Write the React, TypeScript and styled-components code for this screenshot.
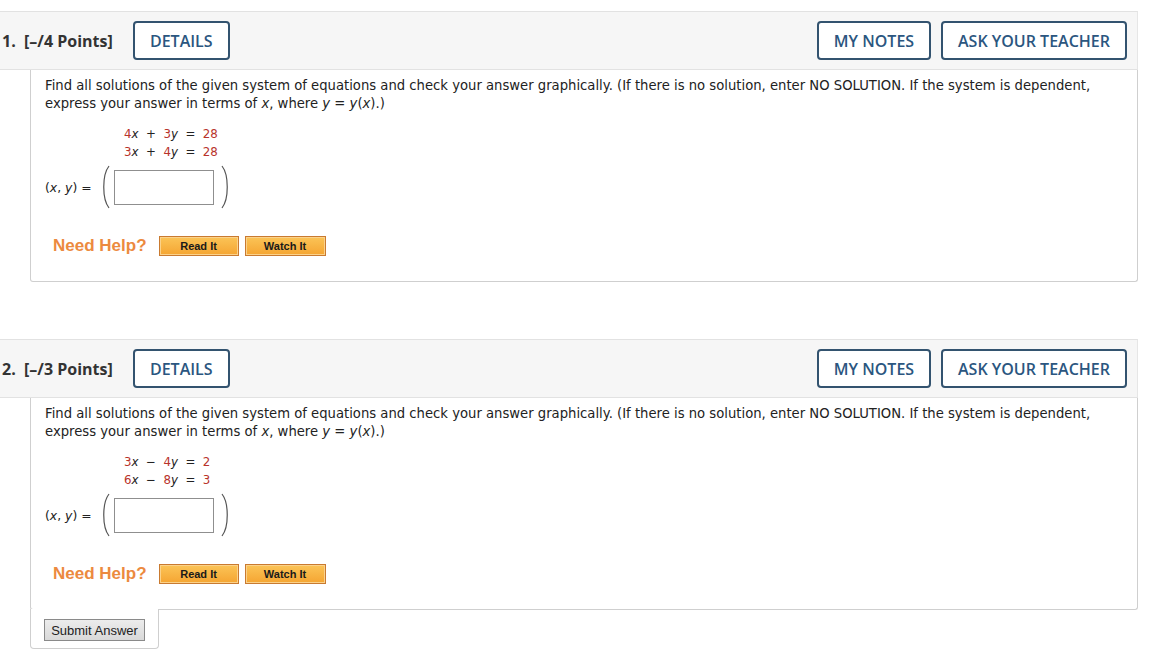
import React from "react";
import styled, { createGlobalStyle } from "styled-components";

const Global = createGlobalStyle`
  html, body { margin: 0; padding: 0; background: #fff; }
  body { font-family: Verdana, "DejaVu Sans", "Noto Sans", sans-serif; color: #222; }
`;

const Page = styled.div`
  padding-top: 11px;
  width: 1138px;
`;

const Block = styled.section<{ $gap?: number }>`
  margin-bottom: ${(p) => p.$gap ?? 0}px;
`;

const Header = styled.div`
  display: flex;
  align-items: center;
  box-sizing: border-box;
  height: 59px;
  background: #f6f6f6;
  border-top: 1px solid #e2e2e2;
  border-bottom: 1px solid #e2e2e2;
  border-right: 1px solid #e6e6e6;
  padding: 0 10px 0 2px;
  gap: 10px;
`;

const Title = styled.div`
  font-family: "Open Sans", sans-serif;
  font-weight: 700;
  font-size: 16px;
  color: #333;
  margin-right: 10px;
  white-space: pre;
`;

const Spacer = styled.div`
  flex: 1;
`;

const OutlineBtn = styled.button<{ $w: number }>`
  box-sizing: border-box;
  width: ${(p) => p.$w}px;
  height: 39px;
  border: 2px solid #33536f;
  border-radius: 4px;
  background: #fff;
  font-family: "Open Sans", sans-serif;
  font-weight: 600;
  font-size: 16px;
  color: #2b5680;
  padding: 0;
  cursor: pointer;
`;

const Body = styled.div`
  margin-left: 30px;
  box-sizing: border-box;
  width: 1108px;
  height: 212px;
  background: #fff;
  border-left: 1px solid #cfcfcf;
  border-right: 1px solid #cfcfcf;
  border-bottom: 1px solid #cfcfcf;
  border-radius: 0 0 3px 3px;
  padding: 7px 0 0 14px;
`;

const Prompt = styled.p`
  margin: 0;
  width: 1062px;
  font-size: 13.2px;
  line-height: 18px;
  color: #222;
  i { font-style: italic; }
`;

const Equations = styled.div`
  margin: 12px 0 0 79px;
  font-size: 11.8px;
  line-height: 18px;
  color: #222;
  white-space: pre;
  i { font-style: italic; }
`;

const Num = styled.span`
  color: #b8322a;
`;

const AnswerRow = styled.div`
  display: flex;
  align-items: center;
  margin-top: 4px;
  height: 44px;
  font-size: 12.4px;
  color: #222;
  i { font-style: italic; }
`;

const Label = styled.span`
  white-space: pre;
  margin-right: 8px;
`;

const Paren = styled.svg`
  width: 12px;
  height: 44px;
  flex: none;
`;

const AnswerBox = styled.div`
  box-sizing: border-box;
  width: 100px;
  height: 35px;
  border: 1px solid #8f8f8f;
  background: #fff;
  margin: 0 5px 0 2px;
`;

const HelpRow = styled.div`
  display: flex;
  align-items: center;
  gap: 6px;
  margin: 27px 0 0 8px;
`;

const HelpLabel = styled.span`
  font-family: "Liberation Sans", Arial, sans-serif;
  font-weight: 700;
  font-size: 17px;
  color: #ec8a3f;
  margin-right: 6px;
`;

const HelpBtn = styled.button<{ $w: number }>`
  box-sizing: border-box;
  width: ${(p) => p.$w}px;
  height: 20px;
  padding: 0;
  border: 1px solid #c97a30;
  box-shadow: inset 0 0 0 1px #fbd28a;
  background: linear-gradient(#fbc457, #f5a532);
  font-family: "Liberation Sans", Arial, sans-serif;
  font-weight: 700;
  font-size: 11px;
  color: #1a1a1a;
`;

const SubmitTab = styled.div`
  margin-left: 30px;
  margin-top: -1px;
  box-sizing: border-box;
  width: 129px;
  height: 40px;
  background: #fff;
  border-left: 1px solid #cfcfcf;
  border-right: 1px solid #cfcfcf;
  border-bottom: 1px solid #cfcfcf;
  border-radius: 0 0 4px 4px;
  padding: 10px 0 0 13px;
`;

const SubmitBtn = styled.button`
  box-sizing: border-box;
  width: 101px;
  height: 22px;
  padding: 0;
  border: 1px solid #8a8a8a;
  background: linear-gradient(#ececec, #d9d9d9);
  font-family: "Liberation Sans", Arial, sans-serif;
  font-size: 13px;
  color: #222;
`;

const LeftParen = () => (
  <Paren viewBox="0 0 12 44">
    <path d="M9 1 C2 10, 2 34, 9 43" fill="none" stroke="#555" strokeWidth="1.2" />
  </Paren>
);
const RightParen = () => (
  <Paren viewBox="0 0 12 44">
    <path d="M3 1 C10 10, 10 34, 3 43" fill="none" stroke="#555" strokeWidth="1.2" />
  </Paren>
);

type Eq = [string, string, string, string];

const Question = ({
  n,
  points,
  eqs,
  submit,
}: {
  n: number;
  points: number;
  eqs: Eq[];
  submit?: boolean;
}) => (
  <Block $gap={submit ? 0 : 57}>
    <Header>
      <Title>{`${n}.  [–/${points} Points]`}</Title>
      <OutlineBtn $w={97}>DETAILS</OutlineBtn>
      <Spacer />
      <OutlineBtn $w={114}>MY NOTES</OutlineBtn>
      <OutlineBtn $w={186}>ASK YOUR TEACHER</OutlineBtn>
    </Header>
    <Body>
      <Prompt>
        Find all solutions of the given system of equations and check your answer graphically. (If there is no
        solution, enter NO SOLUTION. If the system is dependent, express your answer in terms of <i>x</i>, where{" "}
        <i>y</i> = <i>y</i>(<i>x</i>).)
      </Prompt>
      <Equations>
        {eqs.map((e, i) => (
          <div key={i}>
            <Num>{e[0]}</Num>
            <i>x</i>
            {`  ${e[1]}  `}
            <Num>{e[2]}</Num>
            <i>y</i>
            {"  =  "}
            <Num>{e[3]}</Num>
          </div>
        ))}
      </Equations>
      <AnswerRow>
        <Label>
          (<i>x</i>, <i>y</i>) =
        </Label>
        <LeftParen />
        <AnswerBox />
        <RightParen />
      </AnswerRow>
      <HelpRow>
        <HelpLabel>Need Help?</HelpLabel>
        <HelpBtn $w={80}>Read It</HelpBtn>
        <HelpBtn $w={81}>Watch It</HelpBtn>
      </HelpRow>
    </Body>
    {submit && (
      <SubmitTab>
        <SubmitBtn>Submit Answer</SubmitBtn>
      </SubmitTab>
    )}
  </Block>
);

export default function App() {
  return (
    <Page>
      <Global />
      <Question
        n={1}
        points={4}
        eqs={[
          ["4", "+", "3", "28"],
          ["3", "+", "4", "28"],
        ]}
      />
      <Question
        n={2}
        points={3}
        eqs={[
          ["3", "−", "4", "2"],
          ["6", "−", "8", "3"],
        ]}
        submit
      />
    </Page>
  );
}
